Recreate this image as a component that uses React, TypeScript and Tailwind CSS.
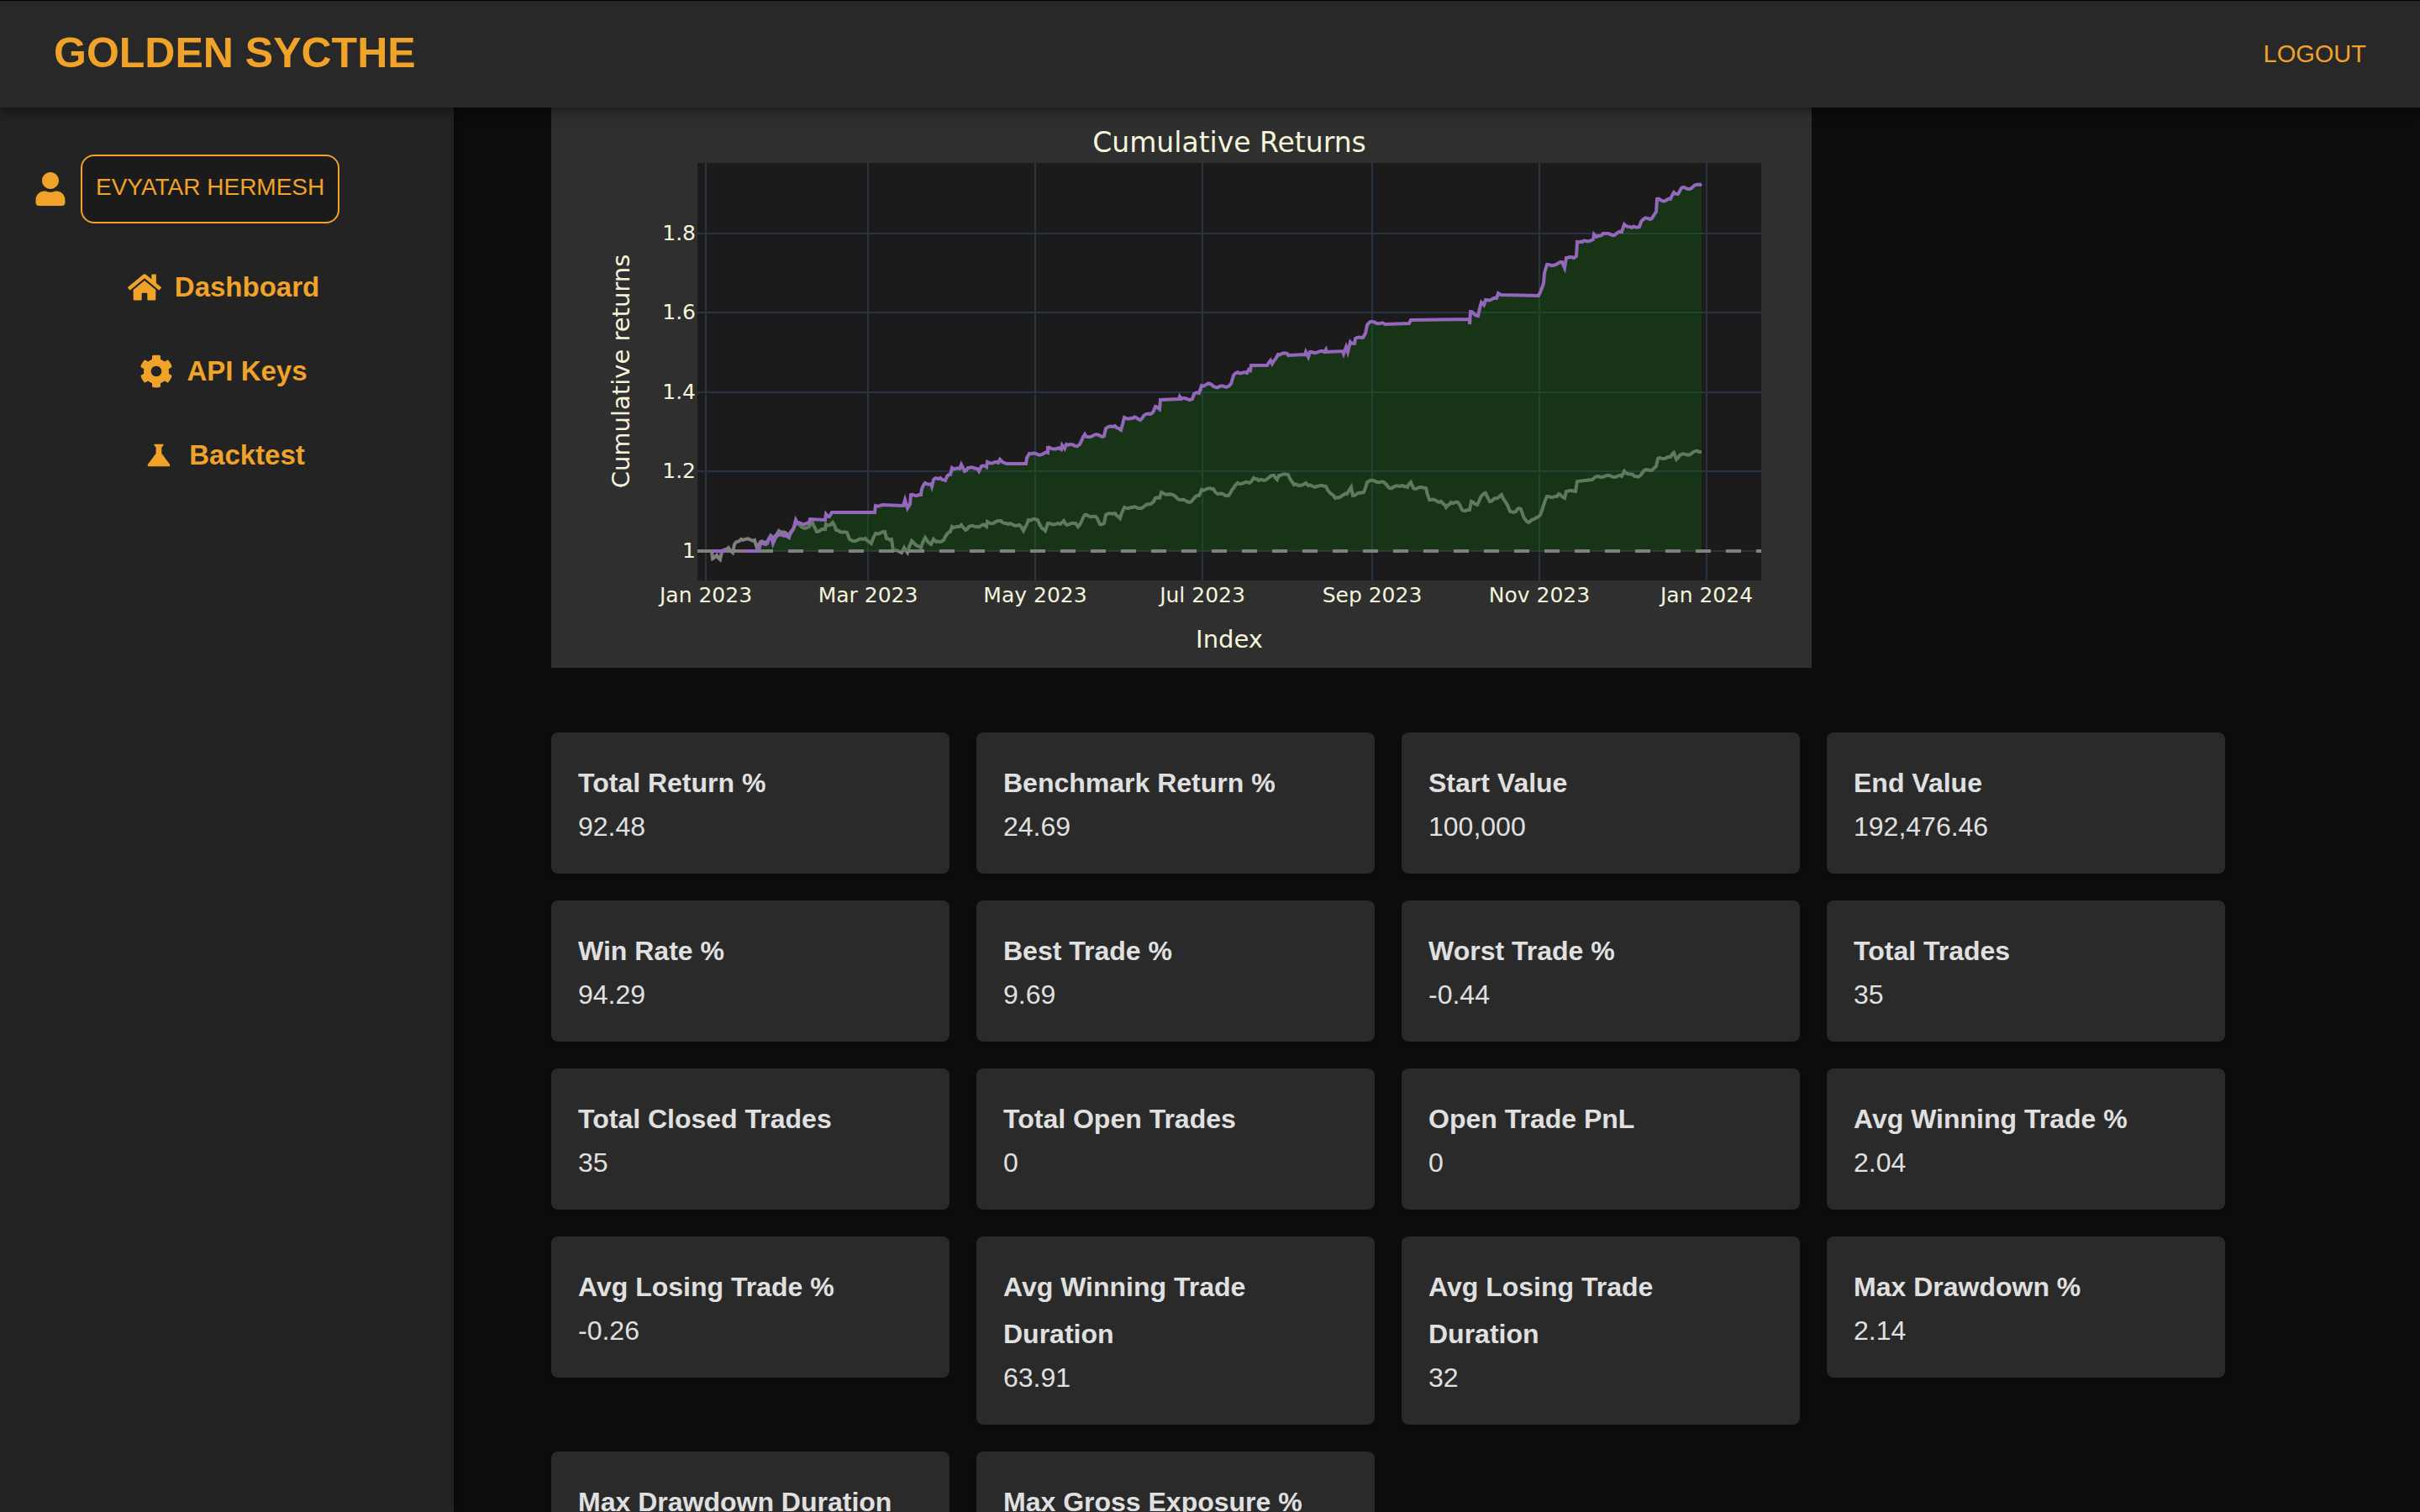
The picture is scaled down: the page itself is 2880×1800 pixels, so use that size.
import React from "react";
import { FaUser, FaHome, FaCog } from "react-icons/fa";
import { MdScience } from "react-icons/md";

const NAV_ITEMS = [
  { label: "Dashboard", Icon: FaHome },
  { label: "API Keys", Icon: FaCog },
  { label: "Backtest", Icon: MdScience },
];

const STATS = [
  { name: "Total Return %", value: "92.48" },
  { name: "Benchmark Return %", value: "24.69" },
  { name: "Start Value", value: "100,000" },
  { name: "End Value", value: "192,476.46" },
  { name: "Win Rate %", value: "94.29" },
  { name: "Best Trade %", value: "9.69" },
  { name: "Worst Trade %", value: "-0.44" },
  { name: "Total Trades", value: "35" },
  { name: "Total Closed Trades", value: "35" },
  { name: "Total Open Trades", value: "0" },
  { name: "Open Trade PnL", value: "0" },
  { name: "Avg Winning Trade %", value: "2.04" },
  { name: "Avg Losing Trade %", value: "-0.26" },
  { name: "Avg Winning Trade Duration", value: "63.91" },
  { name: "Avg Losing Trade Duration", value: "32" },
  { name: "Max Drawdown %", value: "2.14" },
  { name: "Max Drawdown Duration", value: "31" },
  { name: "Max Gross Exposure %", value: "100" },
];

const X_TICKS = [
  { x: 184, label: "Jan 2023" },
  { x: 377, label: "Mar 2023" },
  { x: 576, label: "May 2023" },
  { x: 775, label: "Jul 2023" },
  { x: 977, label: "Sep 2023" },
  { x: 1176, label: "Nov 2023" },
  { x: 1375, label: "Jan 2024" },
];

const Y_TICKS = [
  { y: 150, label: "1.8" },
  { y: 244, label: "1.6" },
  { y: 339, label: "1.4" },
  { y: 433, label: "1.2" },
  { y: 528, label: "1" },
];

const STRATEGY =
  "192,528 247,528 249,519 257,519 259,513 262,511 264,519 267,512 271,507 277,510 283,512 285,505 288,502 291,491 293,495 307,495 308,490 326,491 327,484 331,487 334,482 385,482 386,474 394,473 419,474 421,467 424,477 427,472 428,461 440,461 441,454 445,447 452,448 453,451 455,443 463,441 469,444 471,439 475,437 477,429 486,430 488,425 492,433 496,429 507,430 509,433 512,427 518,428 519,422 532,423 534,419 542,424 565,424 566,417 569,412 579,413 591,411 591,405 602,406 607,407 608,402 611,406 613,401 624,403 629,401 631,397 635,389 637,392 646,390 658,391 660,382 671,379 678,384 680,377 682,369 692,370 696,369 701,372 705,367 715,364 719,356 724,359 725,348 747,347 748,344 750,347 763,347 765,341 771,340 774,331 784,329 791,333 806,332 809,329 812,319 817,315 828,316 830,312 832,313 833,307 852,307 856,301 858,305 865,294 876,293 877,295 897,294 898,291 901,297 903,291 920,291 922,288 923,291 942,290 943,293 946,285 948,291 951,279 956,281 957,275 966,274 969,269 971,259 975,255 978,255 992,258 1021,257 1023,253 1093,252 1093,258 1094,243 1103,248 1105,239 1107,232 1110,235 1112,229 1125,227 1127,221 1130,223 1175,224 1177,220 1181,209 1182,197 1185,187 1196,187 1199,185 1203,184 1206,191 1208,179 1217,179 1220,177 1221,160 1227,160 1240,157 1241,151 1244,154 1252,150 1263,152 1269,149 1274,148 1277,139 1286,143 1295,142 1297,136 1301,132 1308,133 1313,127 1315,124 1316,109 1322,111 1332,109 1336,101 1341,103 1345,96 1357,96 1363,92 1369,91";

const BENCHMARK =
  "191,528 192,537 197,533 201,538 203,529 211,524 216,530 218,520 226,514 242,515 245,525 249,517 257,517 261,510 264,514 271,504 283,509 288,502 291,495 302,501 307,499 311,494 316,505 326,502 327,496 332,497 335,494 339,503 352,506 355,514 362,516 374,513 381,519 386,507 397,505 399,513 405,514 407,527 417,530 420,524 424,530 429,516 440,524 445,512 452,520 455,514 458,517 467,515 471,508 475,505 477,499 486,499 488,497 493,503 497,499 507,499 513,497 518,499 519,493 526,495 535,492 544,496 557,497 562,504 568,491 579,491 582,498 588,504 591,495 606,496 610,492 614,497 624,495 627,499 631,493 635,485 648,487 653,496 658,495 660,485 671,483 677,489 682,476 692,476 701,477 715,471 719,465 724,465 726,458 743,463 749,467 760,470 765,465 771,462 774,455 788,454 793,460 806,462 812,453 817,447 831,447 836,441 842,444 852,442 860,438 864,443 866,438 877,437 884,449 889,450 898,447 901,450 911,451 922,451 927,459 933,465 941,462 947,460 952,452 954,462 967,458 971,446 978,444 992,447 998,453 1013,450 1019,452 1023,446 1026,453 1041,453 1045,467 1059,469 1065,476 1071,470 1079,470 1084,479 1093,479 1095,469 1102,473 1106,464 1112,459 1117,469 1126,465 1131,461 1136,470 1141,481 1148,481 1150,478 1154,478 1157,487 1163,494 1170,490 1177,485 1185,463 1197,463 1199,460 1206,465 1208,457 1219,457 1221,445 1239,443 1246,439 1262,439 1274,439 1277,433 1289,439 1295,439 1301,432 1308,432 1315,427 1317,418 1332,416 1336,411 1339,419 1343,414 1357,412 1362,409 1369,410";

function withIntraday(points: string) {
  const pts = points.split(" ").map((p) => p.split(",").map(Number));
  const out: string[] = [];
  pts.forEach(([x, y], i) => {
    out.push(`${x},${y}`);
    const next = pts[i + 1];
    if (!next || next[0] - x > 17) return;
    for (let nx = x + 2; nx < next[0] - 1; nx += 2) {
      const base = y + ((next[1] - y) * (nx - x)) / (next[0] - x);
      const noise = Math.sin(nx * 12.9898) * 1.1;
      out.push(`${nx},${(base + noise).toFixed(1)}`);
    }
  });
  return out.join(" ");
}

const strategyLine = withIntraday(STRATEGY);
const benchmarkLine = withIntraday(BENCHMARK);

function ReturnsChart() {
  return (
    <svg
      viewBox="0 0 1500 667"
      role="img"
      aria-label="Cumulative Returns"
      className="block w-full max-w-[1500px] bg-[#2f2f2f] fill-[#f5f5dc] font-['DejaVu_Sans',sans-serif]"
    >
      <rect x="174" y="66" width="1266" height="497" fill="#1b1b1b" />
      <g stroke="#283442" strokeWidth="2">
        {X_TICKS.map((t) => (
          <line key={t.label} x1={t.x} x2={t.x} y1="66" y2="563" />
        ))}
        {Y_TICKS.map((t) => (
          <line key={t.label} x1="174" x2="1440" y1={t.y} y2={t.y} />
        ))}
      </g>
      <polyline points={benchmarkLine} fill="none" stroke="#7f7f7f" strokeWidth="4" />
      <polygon points={`${strategyLine} 1369,528`} fill="#117211" fillOpacity="0.3" />
      <polyline points={strategyLine} fill="none" stroke="#9467bd" strokeWidth="4" />
      <line x1="174" x2="1440" y1="528" y2="528" stroke="#808080" strokeWidth="4" strokeDasharray="18 18" />
      <g fontSize="25">
        {X_TICKS.map((t) => (
          <text key={t.label} x={t.x} y="589" textAnchor="middle">
            {t.label}
          </text>
        ))}
        {Y_TICKS.map((t) => (
          <text key={t.label} x="172" y={t.y + 8} textAnchor="end">
            {t.label}
          </text>
        ))}
      </g>
      <text x="807" y="53" fontSize="33" textAnchor="middle">
        Cumulative Returns
      </text>
      <g fontSize="29" textAnchor="middle">
        <text x="807" y="643">Index</text>
        <text transform="translate(93 314) rotate(-90)">Cumulative returns</text>
      </g>
    </svg>
  );
}

function StatCard({ name, value }: { name: string; value: string }) {
  return (
    <div className="rounded-lg bg-[#2a2a2a] p-8 text-[32px] text-[#e0e0e0] shadow-[0_4px_8px_rgba(0,0,0,0.3)]">
      <h3 className="pr-4 leading-[56px] font-bold">{name}</h3>
      <p className="leading-[48px]">{value}</p>
    </div>
  );
}

export default function App() {
  return (
    <div className="flex h-screen flex-col overflow-hidden bg-[#0d0d0d] font-['Liberation_Sans',Arial,sans-serif] text-[#f0a229]">
      <header className="relative z-10 flex h-32 shrink-0 items-center justify-between border-t border-black bg-[#282828] px-16 shadow-[0_4px_8px_-2px_rgba(0,0,0,0.2),0_8px_10px_rgba(0,0,0,0.14),0_2px_20px_rgba(0,0,0,0.12)]">
        <h1 className="pb-1 text-[50px] leading-none font-bold">GOLDEN SYCTHE</h1>
        <button type="button" className="text-[29px] leading-none">
          LOGOUT
        </button>
      </header>

      <div className="flex min-h-0 flex-1">
        <aside className="w-[540px] shrink-0 bg-[#232323] pt-14 shadow-[2px_0_8px_rgba(0,0,0,0.3)]">
          <div className="flex items-center gap-4 pl-10">
            <FaUser className="size-10" />
            <button
              type="button"
              className="h-[82px] rounded-2xl border-2 border-[#f0a229] bg-[#1b1b1b] px-4 pb-1 text-[28px]"
            >
              EVYATAR HERMESH
            </button>
          </div>
          <nav className="mt-[26px] flex flex-col items-center pr-2">
            {NAV_ITEMS.map(({ label, Icon }) => (
              <a key={label} href="#" className="flex h-[100px] items-center gap-4 text-[33px] font-bold">
                <Icon className="size-10" />
                {label}
              </a>
            ))}
          </nav>
        </aside>

        <main className="min-w-0 flex-1 overflow-hidden pr-[232px] pl-[116px]">
          <ReturnsChart />
          <section className="mt-[77px] grid grid-cols-4 items-start gap-8">
            {STATS.map((s) => (
              <StatCard key={s.name} name={s.name} value={s.value} />
            ))}
          </section>
        </main>
      </div>
    </div>
  );
}
